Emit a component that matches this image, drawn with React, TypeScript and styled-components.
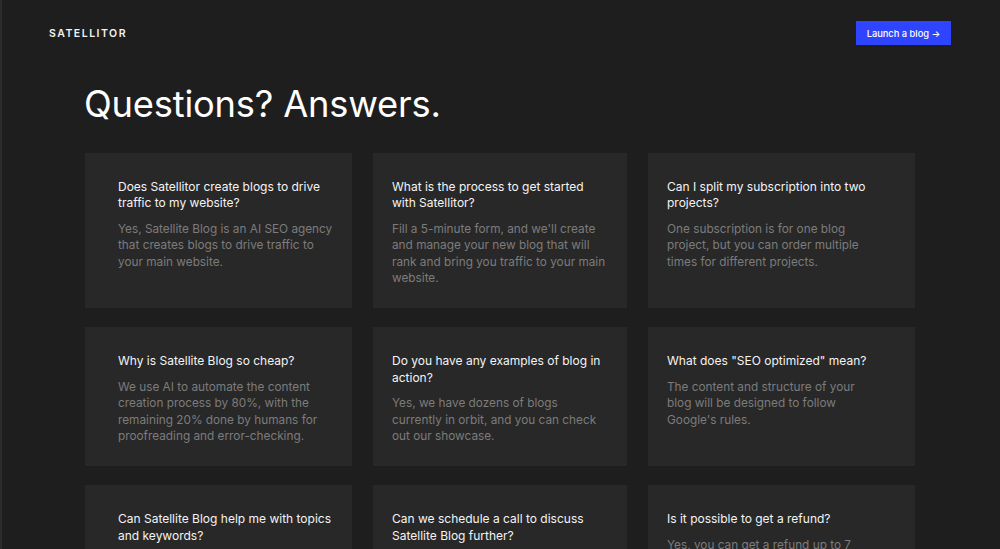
import styled, { createGlobalStyle } from "styled-components";

const faqList = [
  {
    q: "Does Satellitor create blogs to drive traffic to my website?",
    a: "Yes, Satellite Blog is an AI SEO agency that creates blogs to drive traffic to your main website.",
  },
  {
    q: "What is the process to get started with Satellitor?",
    a: "Fill a 5-minute form, and we'll create and manage your new blog that will rank and bring you traffic to your main website.",
  },
  {
    q: "Can I split my subscription into two projects?",
    a: "One subscription is for one blog project, but you can order multiple times for different projects.",
  },
  {
    q: "Why is Satellite Blog so cheap?",
    a: "We use AI to automate the content creation process by 80%, with the remaining 20% done by humans for proofreading and error-checking.",
  },
  {
    q: "Do you have any examples of blog in action?",
    a: "Yes, we have dozens of blogs currently in orbit, and you can check out our showcase.",
  },
  {
    q: 'What does "SEO optimized" mean?',
    a: "The content and structure of your blog will be designed to follow Google's rules.",
  },
  {
    q: "Can Satellite Blog help me with topics and keywords?",
    a: "Yes, we research the best topics and keywords for your niche and plan the content for you.",
  },
  {
    q: "Can we schedule a call to discuss Satellite Blog further?",
    a: "Sure, book a call with our team and we will answer all of your questions.",
  },
  {
    q: "Is it possible to get a refund?",
    a: "Yes, you can get a refund up to 7 business days after your order if you are not satisfied.",
  },
];

// left / right padding per column, as in the design
const columnPad = [
  { left: 33, right: 16 },
  { left: 19, right: 19 },
  { left: 19, right: 36 },
];

function App() {
  return (
    <>
      <GlobalStyle />
      <Page>
        <Header>
          <Logo>SATELLITOR</Logo>
          <LaunchButton>Launch a blog →</LaunchButton>
        </Header>
        <Main>
          <Heading>Questions? Answers.</Heading>
          <Grid>
            {faqList.map((item, i) => (
              <Card
                key={item.q}
                $left={columnPad[i % 3].left}
                $right={columnPad[i % 3].right}
              >
                <Question>{item.q}</Question>
                <Answer>{item.a}</Answer>
              </Card>
            ))}
          </Grid>
        </Main>
      </Page>
    </>
  );
}

const GlobalStyle = createGlobalStyle`
  html, body {
    margin: 0;
    padding: 0;
    background: #1e1e1e;
    overflow: hidden;
  }
  body {
    font-family: Inter, "Noto Sans", sans-serif;
    -webkit-font-smoothing: antialiased;
  }
`;

const Page = styled.div`
  width: 1000px;
  height: 549px;
  background: #1e1e1e;
  box-shadow: inset 2px 0 0 #2c2c2c;
  overflow: hidden;
`;

const Header = styled.header`
  display: flex;
  justify-content: space-between;
  align-items: center;
  padding: 21px 49px 0 49px;
`;

const Logo = styled.div`
  font-family: Inter, sans-serif;
  font-size: 10.5px;
  font-weight: 600;
  letter-spacing: 1.5px;
  color: #f2f2f2;
`;

const LaunchButton = styled.button`
  width: 95px;
  height: 24px;
  border: none;
  background: #2f44ff;
  color: #ffffff;
  font-family: Inter, sans-serif;
  font-size: 9.3px;
  font-weight: 500;
  padding: 0;
  cursor: pointer;
`;

const Main = styled.main`
  width: 830px;
  margin: 0 auto;
`;

const Heading = styled.h1`
  margin: 37px 0 0 -1px;
  font-family: Inter, sans-serif;
  font-size: 36.3px;
  line-height: 44px;
  font-weight: 400;
  color: #ffffff;
  letter-spacing: -0.2px;
`;

const Grid = styled.div`
  display: grid;
  grid-template-columns: 267px 254px 267px;
  column-gap: 21px;
  row-gap: 19px;
  margin-top: 27px;
`;

const Card = styled.div<{ $left: number; $right: number }>`
  background: #282828;
  padding: 26px ${({ $right }) => $right}px 22px ${({ $left }) => $left}px;
`;

const Question = styled.h3`
  margin: 0;
  font-size: 12px;
  line-height: 16.4px;
  font-weight: 400;
  color: #f4f4f4;
`;

const Answer = styled.p`
  margin: 9px 0 0 0;
  font-size: 11.8px;
  line-height: 16.4px;
  font-weight: 400;
  color: #7c7c7c;
`;

export default App;
